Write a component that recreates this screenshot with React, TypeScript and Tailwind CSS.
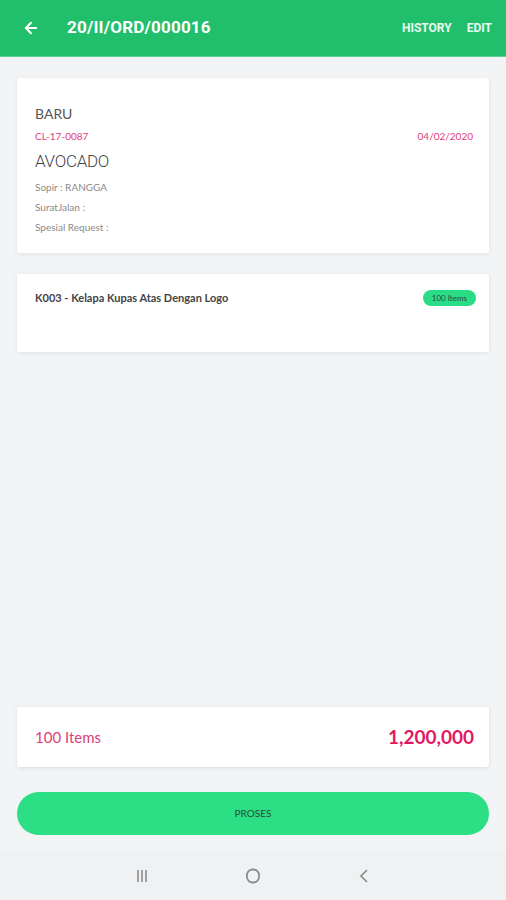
import React from "react";
import { ArrowLeft } from "lucide-react";

const body = { fontFamily: "Lato, 'Open Sans', sans-serif" };

export default function App() {
  return (
    <div className="flex h-[900px] w-full flex-col bg-[#f3f4f6]" style={body}>
      {/* App bar */}
      <div className="flex h-[57px] shrink-0 items-center border-b border-[#5fd08f] bg-[#21bf6b] pl-[22px] pr-[14px] text-white">
        <ArrowLeft className="h-[18px] w-[18px]" strokeWidth={2.6} />
        <h1 className="ml-[27px] text-[17px] font-bold tracking-[0.2px]" style={{ fontFamily: "Roboto, sans-serif" }}>
          20/II/ORD/000016
        </h1>
        <div className="ml-auto flex gap-[15px] text-[12px] font-bold text-white/90" style={{ fontFamily: "Roboto, sans-serif" }}>
          <span>HISTORY</span>
          <span>EDIT</span>
        </div>
      </div>

      <div className="flex flex-1 flex-col px-[17px]">
        {/* Order info */}
        <div className="mt-[21px] h-[175px] rounded-[2px] bg-white pl-[18px] pr-[16px] pt-[26px] shadow-[0_1px_4px_rgba(0,0,0,0.08)]">
          <div className="text-[14px] leading-[20px] text-[#555]">BARU</div>
          <div className="mt-[5px] flex justify-between text-[10px] leading-[14px] text-[#e0407a]">
            <span>CL-17-0087</span>
            <span>04/02/2020</span>
          </div>
          <div
            className="mt-[6px] text-[17px] font-light leading-[24px] tracking-[-0.3px] text-[#444]"
            style={{ fontFamily: "Roboto, sans-serif" }}
          >
            AVOCADO
          </div>
          <div className="mt-[4px] text-[10px] leading-[20px] text-[#8a8a8a]">Sopir : RANGGA</div>
          <div className="text-[10px] leading-[20px] text-[#8a8a8a]">SuratJalan :</div>
          <div className="text-[10px] leading-[20px] text-[#8a8a8a]">Spesial Request :</div>
        </div>

        {/* Item */}
        <div className="mt-[21px] flex h-[78px] items-start justify-between rounded-[2px] bg-white pl-[18px] pr-[13px] pt-[16px] shadow-[0_1px_4px_rgba(0,0,0,0.08)]">
          <span className="text-[11px] font-bold leading-[16px] text-[#444]">K003 - Kelapa Kupas Atas Dengan Logo</span>
          <span className="rounded-full bg-[#2bdc86] px-[9px] text-[8px] leading-[16px] text-[#2b4a38]">100 Items</span>
        </div>

        <div className="flex-1" />

        {/* Total */}
        <div className="flex h-[60px] items-center justify-between rounded-[2px] bg-white pl-[18px] pr-[15px] shadow-[0_1px_4px_rgba(0,0,0,0.1)]">
          <span className="text-[15px] text-[#e0407a]">100 Items</span>
          <span className="text-[19px] font-bold text-[#e3175f]">1,200,000</span>
        </div>

        <button className="mb-[17px] mt-[25px] h-[43px] w-full rounded-full bg-[#2ddf84] text-[10px] text-[#2c4a38]">
          PROSES
        </button>
      </div>

      {/* System nav */}
      <div className="flex h-[48px] shrink-0 items-center justify-center gap-[96px] bg-[#f0f1f3] text-[#8d8d8d]">
        <svg width="14" height="14" viewBox="0 0 14 14" fill="none" stroke="currentColor" strokeWidth="1.6">
          <path d="M3 1v12M7 1v12M11 1v12" />
        </svg>
        <svg width="16" height="16" viewBox="0 0 16 16" fill="none" stroke="currentColor" strokeWidth="1.8">
          <rect x="2" y="1.5" width="12" height="13" rx="5.5" />
        </svg>
        <svg width="14" height="16" viewBox="0 0 14 16" fill="none" stroke="currentColor" strokeWidth="1.7">
          <path d="M10 2L4 8l6 6" />
        </svg>
      </div>
    </div>
  );
}
